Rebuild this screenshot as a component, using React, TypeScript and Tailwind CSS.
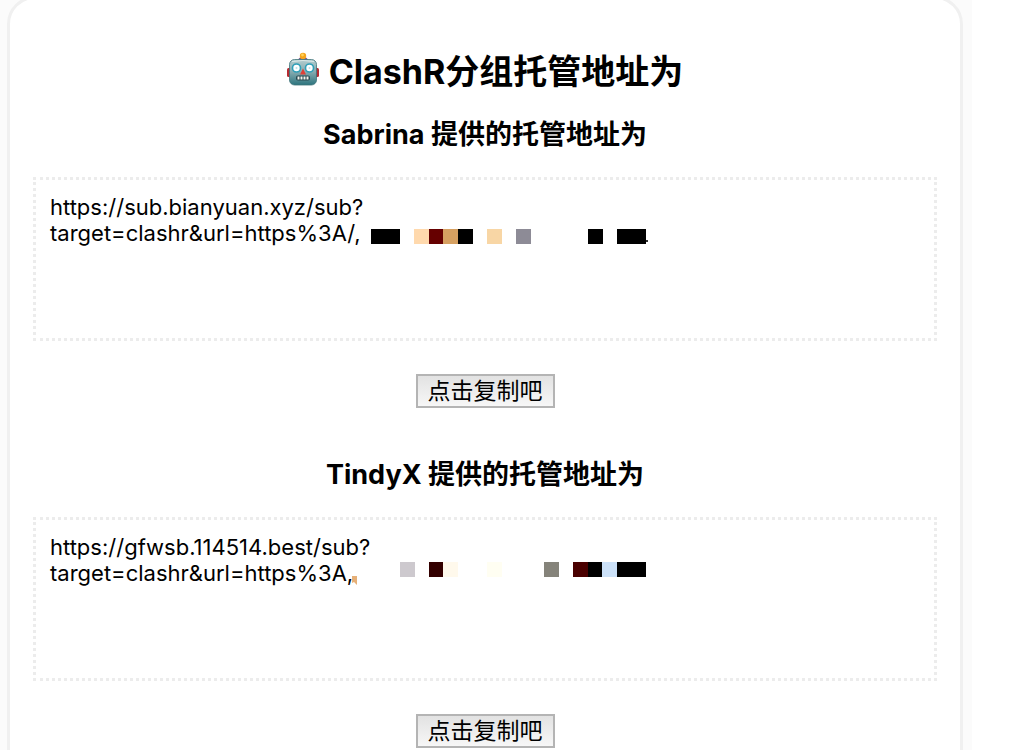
import React, { useRef } from "react";

type Cell = { x: number; w?: number; color: string };

type Provider = {
    id: string;
    name: string;
    url: string;
    cells: Cell[];
    mark: React.ReactNode;
    maskClass: string;
};

const providers: Provider[] = [
    {
        id: "sabrina",
        name: "Sabrina",
        url: "https://sub.bianyuan.xyz/sub?\ntarget=clashr&url=https%3A/,",
        maskClass: "top-[52px]",
        mark: <path d="M296 11h2v2h-2z" fill="#333" />,
        cells: [
            { x: 21, w: 29, color: "#000" },
            { x: 64, color: "#ffd9ad" },
            { x: 79, color: "#660000" },
            { x: 93, color: "#d6a061" },
            { x: 108, color: "#000" },
            { x: 137, color: "#f8d6a5" },
            { x: 166, color: "#8d8b96" },
            { x: 238, color: "#000" },
            { x: 267, w: 29, color: "#000" },
        ],
    },
    {
        id: "tindyx",
        name: "TindyX",
        url: "https://gfwsb.114514.best/sub?\ntarget=clashr&url=https%3A,",
        maskClass: "top-[45px]",
        mark: <path d="M2 14h5v9l-3-3-2 1z" fill="#e6b078" />,
        cells: [
            { x: 50, color: "#cdc9ce" },
            { x: 79, color: "#330000" },
            { x: 93, color: "#fff9ec" },
            { x: 137, color: "#fffef2" },
            { x: 194, color: "#85837a" },
            { x: 223, color: "#4a0000" },
            { x: 238, color: "#000" },
            { x: 252, color: "#cce1f8" },
            { x: 267, w: 29, color: "#000" },
        ],
    },
];

// Emoji style robot face
const RobotIcon: React.FC = () => (
    <svg className="h-9 w-8 shrink-0" viewBox="0 0 32 36" aria-hidden="true">
        <defs>
            <linearGradient id="face" x1="0" y1="0" x2="0" y2="1">
                <stop offset="0" stopColor="#b4cdcf" />
                <stop offset="0.5" stopColor="#83a9ae" />
                <stop offset="1" stopColor="#2c747e" />
            </linearGradient>
        </defs>
        <rect x="0" y="16" width="4" height="9" rx="1.5" fill="#b52b32" />
        <rect x="28" y="16" width="4" height="9" rx="1.5" fill="#b52b32" />
        <path d="M11 8q1-3 5-3t5 3z" fill="#75508e" />
        <circle cx="16" cy="4" r="3.2" fill="#f5a51c" />
        <circle cx="15.5" cy="3" r="1.4" fill="#ffd35a" />
        <rect x="2.5" y="7.5" width="27" height="25.5" rx="5" fill="url(#face)" stroke="#3f737a" strokeWidth="0.8" />
        <path d="M5 9.5q11-2 22 0" fill="none" stroke="#dce9e8" />
        <circle cx="9.5" cy="16" r="4" fill="#fff" stroke="#2f9fb8" strokeWidth="1.6" />
        <circle cx="22.5" cy="16" r="4" fill="#fff" stroke="#2f9fb8" strokeWidth="1.6" />
        <circle cx="9.5" cy="16" r="1" fill="#b9e4ea" />
        <circle cx="22.5" cy="16" r="1" fill="#b9e4ea" />
        <path d="M16 16.5l3 6h-6z" fill="#df4037" />
        <rect x="9" y="23.5" width="14" height="5" rx="2" fill="#264850" />
        <path d="M10.5 24.5h2v3h-2zM13.5 24.5h2v3h-2zM16.5 24.5h2v3h-2zM19.5 24.5h2v3h-2z" fill="#f3f4ed" />
    </svg>
);

const ProviderBlock: React.FC<{ provider: Provider }> = ({ provider }) => {
    const textRef = useRef<HTMLTextAreaElement>(null);

    const handleCopy = () => {
        textRef.current?.select();
        navigator.clipboard?.writeText(provider.url);
    };

    return (
        <section className="flex flex-col items-center">
            <h3 className="text-[27px] leading-10 font-bold">
                <label htmlFor={provider.id}>{provider.name} 提供的托管地址为</label>
            </h3>

            <div className="relative mt-[22px] w-full">
                <textarea
                    id={provider.id}
                    ref={textRef}
                    readOnly
                    defaultValue={provider.url}
                    className="block h-[164px] w-full resize-none overflow-hidden border-3 border-dotted border-[#ececec] bg-white px-[14px] py-[14px] text-[22px] leading-[26px] outline-none"
                />
                {/* Hidden part of the address */}
                <svg
                    className={`pointer-events-none absolute left-[317px] h-6 w-[300px] ${provider.maskClass}`}
                    viewBox="0 0 300 24"
                    aria-hidden="true"
                >
                    {provider.cells.map((cell) => (
                        <rect key={cell.x} x={cell.x} y="0" width={cell.w ?? 15} height="15" fill={cell.color} />
                    ))}
                    {provider.mark}
                </svg>
            </div>

            <button
                type="button"
                onClick={handleCopy}
                className="mt-[33px] border-2 border-[#b4b4b4] bg-linear-to-b from-[#e2e2e2] to-[#f7f7f7] px-[10px] text-[23px] leading-[30px]"
            >
                点击复制吧
            </button>
        </section>
    );
};

const App: React.FC = () => {
    return (
        <div className="h-screen overflow-hidden bg-white font-['Inter','Noto_Sans_CJK_SC',sans-serif] text-black">
            <div className="mr-[52px] bg-[#fbfbfb] pr-[9px] pl-[7px]">
                <main className="-mt-1 rounded-t-[28px] border-3 border-[#f0f0f0] bg-white px-[23px] pt-12 pb-12">
                    <h2 className="flex items-center justify-center gap-[10px] text-[34px] leading-[50px] font-bold">
                        <span className="pb-1">
                            <RobotIcon />
                        </span>
                        <span>ClashR分组托管地址为</span>
                    </h2>
                    <div className="mt-[18px] flex flex-col gap-[47px]">
                        {providers.map((provider) => (
                            <ProviderBlock key={provider.id} provider={provider} />
                        ))}
                    </div>
                </main>
            </div>
        </div>
    );
};

export default App;
